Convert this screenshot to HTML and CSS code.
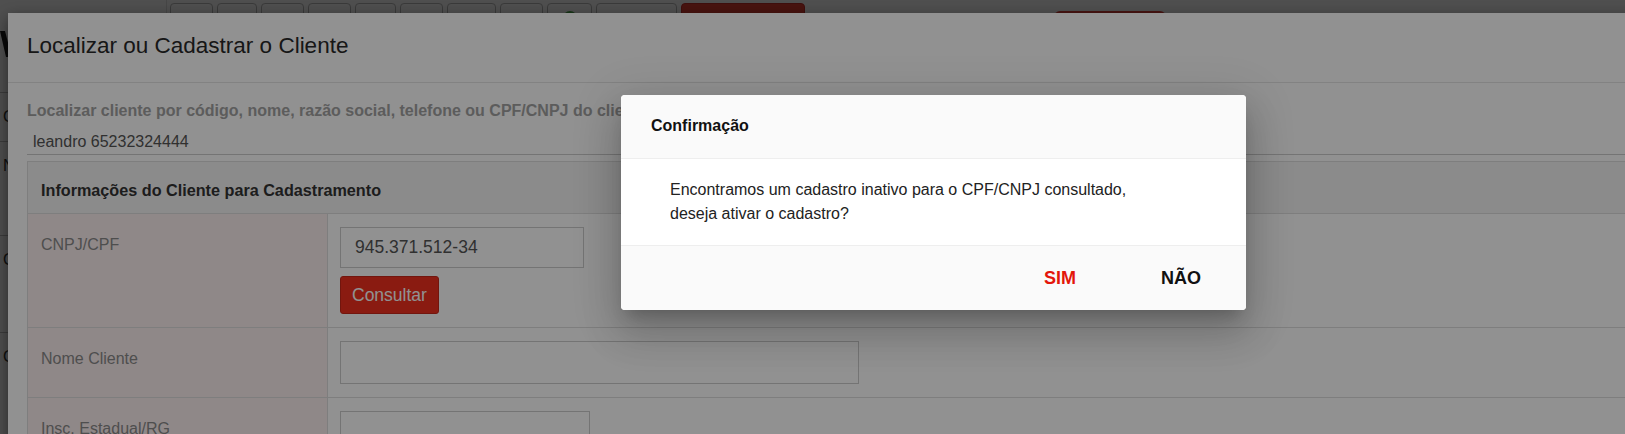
FILE: index.html
```html
<!DOCTYPE html>
<html lang="pt-BR">
<head>
  <meta charset="UTF-8" />
  <title>Localizar ou Cadastrar o Cliente</title>
  <link rel="stylesheet" href="styles.css">
</head>
<body>

  <!-- tela de fundo (coberta pelo modal) -->
  <div class="app">
    <div class="topo">
      <div class="logo">
        <svg width="12" height="60" viewBox="0 0 12 60">
          <polygon points="0,31 5,31 10,50 10,57 6,57" fill="#1e1e1e" />
        </svg>
      </div>
      <div class="barra">
        <button class="btn-topo w43"></button>
        <button class="btn-topo w40"></button>
        <button class="btn-topo w43"></button>
        <button class="btn-topo w43"></button>
        <button class="btn-topo w41"></button>
        <button class="btn-topo w43"></button>
        <button class="btn-topo w49"></button>
        <button class="btn-topo w43"></button>
        <button class="btn-topo w45"><span class="ponto"></span></button>
        <button class="btn-topo w81"></button>
        <button class="btn-topo btn-vermelho w124"></button>
        <span class="pilula"></span>
      </div>
    </div>

    <div class="lista">
      <div class="item curto">C</div>
      <div class="item medio">N</div>
      <div class="item longo">C</div>
      <div class="item longo">C</div>
    </div>
  </div>

  <div class="fundo fundo-app"></div>

  <!-- modal principal -->
  <div class="modal">
    <div class="modal-header">
      <h4>Localizar ou Cadastrar o Cliente</h4>
    </div>
    <div class="modal-body">
      <label class="rotulo" for="busca">Localizar cliente por código, nome, razão social, telefone ou CPF/CNPJ do cliente</label>
      <input type="text" id="busca" class="busca" value="leandro 65232324444">

      <div class="painel">
        <div class="painel-titulo">Informações do Cliente para Cadastramento</div>
        <table class="tabela">
          <tr>
            <td class="campo">CNPJ/CPF</td>
            <td class="valor">
              <input type="text" class="entrada w244" value="945.371.512-34">
              <button class="btn-consultar">Consultar</button>
            </td>
          </tr>
          <tr>
            <td class="campo">Nome Cliente</td>
            <td class="valor">
              <input type="text" class="entrada alta w519">
            </td>
          </tr>
          <tr>
            <td class="campo">Insc. Estadual/RG</td>
            <td class="valor">
              <input type="text" class="entrada alta w250">
            </td>
          </tr>
        </table>
      </div>
    </div>
  </div>

  <div class="fundo fundo-modal"></div>

  <!-- confirmação -->
  <div class="dialogo">
    <div class="dialogo-titulo">Confirmação</div>
    <div class="dialogo-corpo">
      Encontramos um cadastro inativo para o CPF/CNPJ consultado,<br>
      deseja ativar o cadastro?
    </div>
    <div class="dialogo-acoes">
      <button class="acao sim">SIM</button>
      <button class="acao nao">NÃO</button>
    </div>
  </div>

</body>
</html>
```

FILE: styles.css
```css
body {
  margin: 0;
  font-family: "Liberation Sans", Arial, sans-serif;
  background-color: #fff;
  overflow: hidden;
  height: 434px;
  position: relative;
}

/* tela de fundo */
.topo {
  display: flex;
  height: 60px;
}
.logo {
  width: 166px;
  border-right: 1px solid #e2e2e2;
}
.barra {
  display: flex;
  align-items: flex-start;
  gap: 4px;
  padding: 3px 0 0 3px;
}
.btn-topo {
  height: 40px;
  background-color: #fff;
  border: 1px solid #bbb;
  border-radius: 4px;
  display: flex;
  justify-content: center;
  padding: 0;
}
.btn-vermelho {
  background-color: #ea4034;
  border-color: #c9302c;
}
.ponto {
  width: 14px;
  height: 14px;
  border-radius: 50%;
  background-color: #4cae4c;
  margin-top: 7px;
}
.pilula {
  width: 112px;
  height: 34px;
  border-radius: 6px;
  background-color: #e8433a;
  margin: 8px 0 0 245px;
}
.w40 { width: 40px; }
.w41 { width: 41px; }
.w43 { width: 43px; }
.w45 { width: 45px; }
.w49 { width: 49px; }
.w81 { width: 81px; }
.w124 { width: 124px; }

.lista {
  padding-top: 32px;
  width: 20px;
}
.item {
  box-sizing: border-box;
  border-top: 1px solid #c4c4c4;
  padding: 14px 0 0 3px;
  font-size: 16px;
  line-height: 20px;
  color: #333;
}
.curto { height: 49px; }
.medio { height: 94px; }
.longo { height: 97px; }

.fundo {
  position: absolute;
  top: 0;
  left: 0;
  right: 0;
  bottom: 0;
}
.fundo-app {
  background-color: rgba(0, 0, 0, 0.45);
}
.fundo-modal {
  background-color: rgba(0, 0, 0, 0.43);
}

/* modal principal */
.modal {
  position: absolute;
  top: 13px;
  left: 8px;
  right: -60px;
  bottom: -100px;
  background-color: #fff;
  box-shadow: 0 5px 15px rgba(0, 0, 0, 0.5);
  color: #333;
}
.modal-header {
  padding: 20px 19px 24px;
  border-bottom: 1px solid #e5e5e5;
}
.modal-header h4 {
  margin: 0;
  font-size: 22.5px;
  line-height: 25px;
  font-weight: normal;
  color: #2a2a2a;
}
.modal-body {
  padding: 18px 0 0 19px;
}
.rotulo {
  display: block;
  font-size: 16px;
  line-height: 20px;
  font-weight: bold;
  color: #a3a3a3;
  white-space: nowrap;
}
.busca {
  display: block;
  box-sizing: border-box;
  width: 100%;
  height: 34px;
  padding: 8px 6px 0;
  border: none;
  border-bottom: 1px solid #ccc;
  font-family: inherit;
  font-size: 16px;
  color: #555;
  background: transparent;
}

.painel {
  margin-top: 6px;
  border: 1px solid #ddd;
}
.painel-titulo {
  background-color: #f5f5f5;
  border-bottom: 1px solid #ddd;
  padding: 18px 13px 13px;
  font-size: 16.2px;
  line-height: 20px;
  font-weight: bold;
  color: #333;
}
.tabela {
  width: 100%;
  border-collapse: collapse;
}
.tabela tr + tr td {
  border-top: 1px solid #ddd;
}
.campo {
  width: 273px;
  vertical-align: top;
  background-color: #fcefef;
  border-right: 1px solid #ddd;
  padding: 19px 13px;
  font-size: 16px;
  line-height: 23px;
  color: #8a8a8a;
}
.valor {
  vertical-align: top;
  padding: 13px 12px 13px 12px;
}
.entrada {
  display: block;
  box-sizing: border-box;
  height: 41px;
  padding: 0 14px;
  border: 1px solid #ccc;
  font-family: inherit;
  font-size: 17.5px;
  color: #555;
  background-color: #fff;
}
.alta { height: 43px; }
.w244 { width: 244px; }
.w250 { width: 250px; }
.w519 { width: 519px; }

.btn-consultar {
  display: block;
  margin-top: 8px;
  height: 38px;
  padding: 0 11px;
  background-color: #f3301f;
  border: 1px solid #c9281a;
  border-radius: 3px;
  color: #fff;
  font-family: inherit;
  font-size: 17.5px;
}

/* confirmação */
.dialogo {
  position: absolute;
  top: 95px;
  left: 621px;
  width: 625px;
  background-color: #fff;
  border-radius: 4px;
  overflow: hidden;
  box-shadow: 0 11px 15px -7px rgba(0, 0, 0, 0.2),
              0 24px 38px 3px rgba(0, 0, 0, 0.14),
              0 9px 46px 8px rgba(0, 0, 0, 0.12);
}
.dialogo-titulo {
  background-color: #fafafa;
  border-bottom: 1px solid #eee;
  padding: 21px 30px 22px;
  font-size: 16px;
  line-height: 20px;
  font-weight: bold;
  color: #111;
}
.dialogo-corpo {
  padding: 19px 49px;
  font-size: 16px;
  line-height: 24px;
  color: #222;
}
.dialogo-acoes {
  display: flex;
  justify-content: flex-end;
  align-items: center;
  gap: 45px;
  height: 64px;
  padding-right: 25px;
  background-color: #fafafa;
  border-top: 1px solid #eee;
}
.acao {
  background: transparent;
  border: none;
  padding: 8px 20px;
  font-family: inherit;
  font-size: 18px;
  font-weight: bold;
}
.sim {
  color: #e3160b;
}
.nao {
  color: #111;
}
```
